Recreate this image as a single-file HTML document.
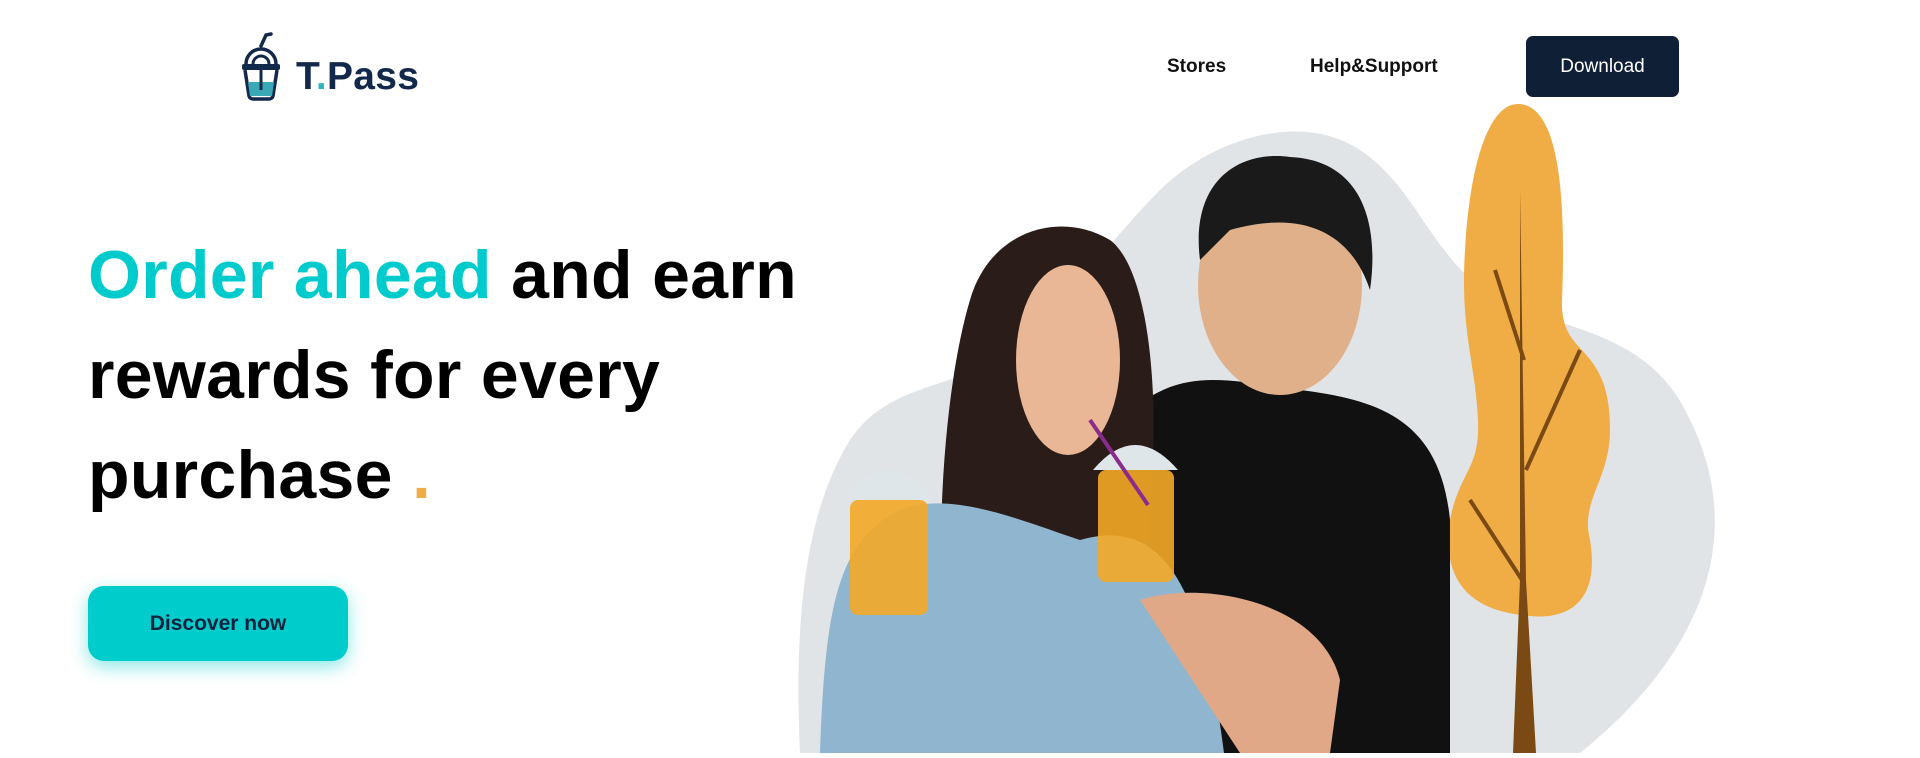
<!DOCTYPE html>
<html><head><meta charset="utf-8"><style>
*{margin:0;padding:0;box-sizing:border-box}
body{width:1920px;height:758px;overflow:hidden;background:#fff;font-family:"Liberation Sans",Arial,sans-serif;position:relative}
.nav{position:absolute;top:56px;font-size:19px;font-weight:bold;color:#111}
.dl{position:absolute;left:1526px;top:36px;width:153px;height:61px;background:#0f1f36;color:#fff;border-radius:7px;font-size:19px;display:flex;align-items:center;justify-content:center}
h1{position:absolute;left:88px;top:225px;font-size:68px;line-height:100px;font-weight:bold;color:#000;letter-spacing:0.3px}
h1 .t{color:#00cbcc}
h1 .d{color:#f0ad45}
.btn{position:absolute;left:88px;top:586px;width:260px;height:75px;background:#00cccc;border-radius:16px;box-shadow:0 6px 18px rgba(0,204,204,.45);color:#14213d;font-weight:bold;font-size:21px;display:flex;align-items:center;justify-content:center}
.logo{position:absolute;left:296px;top:55px;font-size:39px;font-weight:bold;color:#13294b;letter-spacing:0.3px}
</style></head><body>
<svg style="position:absolute;left:238px;top:32px" width="46" height="70" viewBox="0 0 46 70">
<path d="M23 14 L28 3 L33 2" stroke="#13294b" stroke-width="3.5" fill="none" stroke-linecap="round"/>
<path d="M8 32 A15 15 0 0 1 38 32" stroke="#13294b" stroke-width="3.5" fill="none"/>
<path d="M15 32 A8 8 0 0 1 31 32" stroke="#13294b" stroke-width="3" fill="none"/>
<rect x="4" y="32" width="38" height="6" rx="2" fill="#13294b"/>
<path d="M7 38 L11 64 Q12 67 15 67 L31 67 Q34 67 35 64 L39 38" stroke="#13294b" stroke-width="3.5" fill="none"/>
<path d="M10 50 L36 50 L34 64 L12 64 Z" fill="#3aa9b5"/>
<path d="M23 38 L23 58" stroke="#13294b" stroke-width="3"/>
</svg>
<div class="logo">T<span style="color:#2bb5c2">.</span>Pass</div>
<div class="nav" style="left:1167px">Stores</div>
<div class="nav" style="left:1310px">Help&amp;Support</div>
<div class="dl">Download</div>
<h1><span class="t">Order ahead</span> and earn<br>rewards for every<br>purchase <span class="d">.</span></h1>
<div class="btn">Discover now</div>
<svg style="position:absolute;left:0;top:0" width="1920" height="758" viewBox="0 0 1920 758">
<path d="M800 753 C795 640 800 520 850 440 C890 380 960 390 1010 350 C1070 300 1110 240 1160 190 C1210 140 1300 110 1360 150 C1420 190 1430 260 1500 300 C1560 330 1650 330 1690 420 C1740 520 1720 640 1580 753 Z" fill="#e1e4e7"/>
<path d="M1518 104 C1560 104 1566 200 1562 300 C1560 360 1610 340 1610 430 C1610 480 1580 500 1590 540 C1600 600 1570 620 1530 616 C1480 612 1440 590 1450 520 C1460 470 1480 470 1478 420 C1475 360 1460 330 1465 250 C1470 160 1490 104 1518 104 Z" fill="#f0ad45"/>
<path d="M1520 190 L1526 580 L1536 753 L1513 753 L1520 580 Z" fill="#7b4a14"/>
<path d="M1495 270 L1524 360 M1580 350 L1526 470 M1470 500 L1522 580" stroke="#7b4a14" stroke-width="4"/>
<path d="M1145 400 C1190 370 1230 380 1300 390 C1380 400 1440 420 1450 520 L1450 753 L1145 753 Z" fill="#111"/>
<ellipse cx="1280" cy="285" rx="82" ry="110" fill="#e0b08a"/>
<path d="M1200 260 C1190 180 1240 150 1290 157 C1360 160 1380 220 1370 290 C1350 230 1300 210 1230 230 Z" fill="#1a1a1a"/>
<path d="M955 735 C930 600 940 400 970 300 C990 230 1060 210 1110 240 C1150 270 1160 400 1150 500 C1140 600 1150 700 1130 735 Z" fill="#2a1c18"/>
<ellipse cx="1068" cy="360" rx="52" ry="95" fill="#e9b795"/>
<path d="M820 753 C825 600 840 540 900 510 C950 490 1020 520 1080 540 C1150 520 1200 560 1224 753 Z" fill="#8fb5cf"/>
<path d="M1140 600 C1200 580 1320 600 1340 680 L1330 753 L1240 753 Z" fill="#e0a886"/>
<rect x="850" y="500" width="78" height="115" rx="8" fill="#f3a826" opacity=".9"/>
<path d="M845 500 Q888 440 932 500 Z" fill="#dfe6ea"/>
<rect x="1098" y="470" width="76" height="112" rx="8" fill="#f3a826" opacity=".9"/>
<path d="M1093 470 Q1135 420 1178 470 Z" fill="#dfe6ea"/>
<path d="M1090 420 L1148 505" stroke="#8a2c8c" stroke-width="4"/>
</svg>
</body></html>
